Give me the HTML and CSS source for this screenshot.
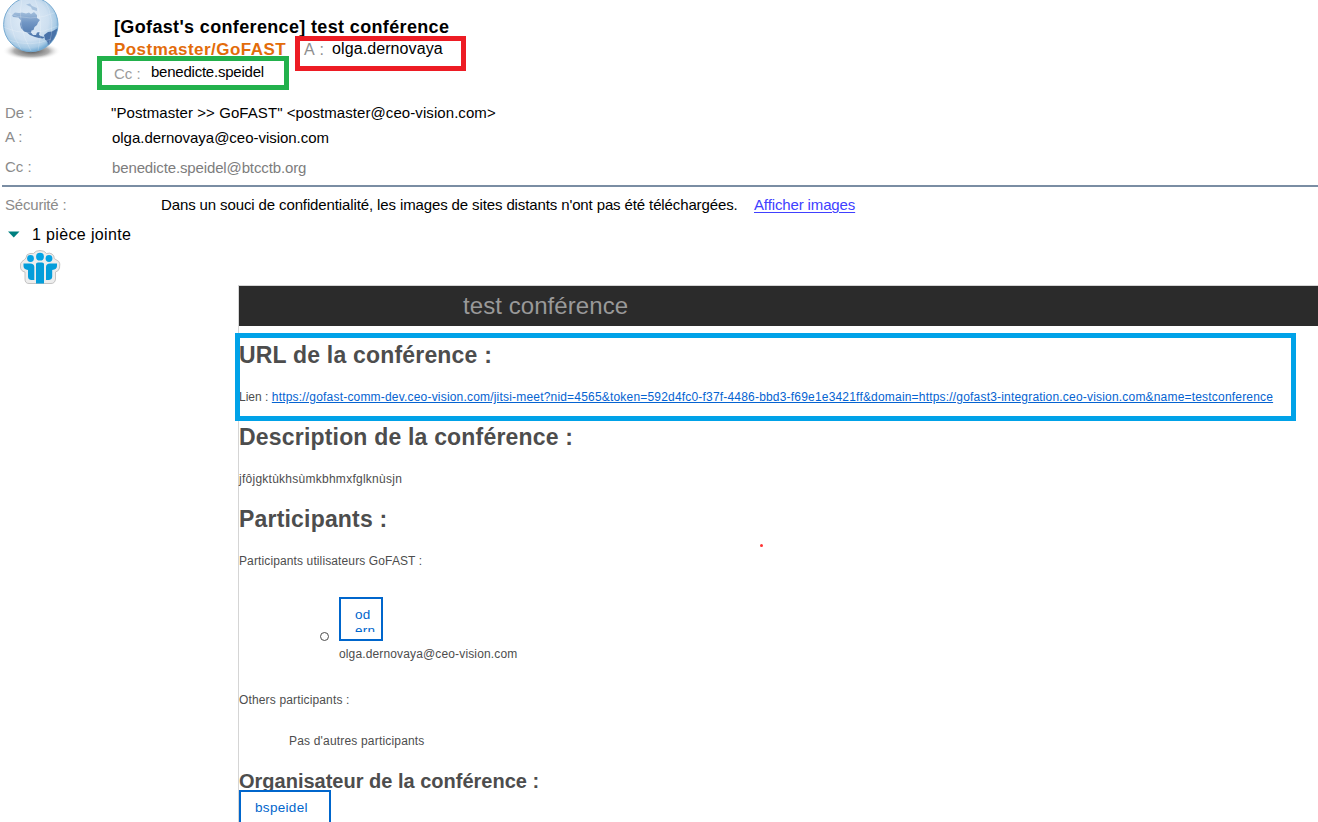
FILE: index.html
```html
<!DOCTYPE html>
<html lang="fr">
<head>
<meta charset="utf-8">
<title>test conférence</title>
<link rel="stylesheet" href="styles.css">
</head>
<body>
<header class="head">
  <svg class="globe" width="64" height="62" viewBox="0 0 64 62">
    <defs>
      <radialGradient id="sea" cx=".45" cy=".42" r=".58"><stop offset="0" stop-color="#e3eef8"/><stop offset=".65" stop-color="#cddff0"/><stop offset=".88" stop-color="#a9cbe5"/><stop offset="1" stop-color="#76acd4"/></radialGradient>
      <radialGradient id="shade"><stop offset="0" stop-color="#444" stop-opacity=".95"/><stop offset=".6" stop-color="#777" stop-opacity=".6"/><stop offset="1" stop-color="#fff" stop-opacity="0"/></radialGradient>
      <linearGradient id="land" x1="0" y1="0" x2="0" y2="1"><stop offset="0" stop-color="#a3bfdc"/><stop offset=".4" stop-color="#7196c4"/><stop offset="1" stop-color="#4a73a9"/></linearGradient>
      <clipPath id="disc"><circle cx="30.800" cy="24.500" r="27"/></clipPath>
    </defs>
    <ellipse cx="31.500" cy="51" rx="29" ry="9" fill="url(#shade)"/>
    <circle cx="30.800" cy="24.500" r="27.200" fill="url(#sea)" stroke="#78abd2" stroke-width="1"/>
    <g clip-path="url(#disc)">
      <path d="M12 15L15 12.500L19 13L22 12.500L26 13.500L29 12.500L31 14L34 12L37 15L37 18L40 20L38 22.500L37 25L34.500 27L33.500 30L31.500 30.500L31 32.500L33 35L36 35L37 32.500L39.500 32L39 35L42 36.500L44.500 37L43 38.500L39 38L35 37L30 35L27 32.500L24 31.500L21 28L20 24L21 20.500L18.500 17.500L13 17z" fill="url(#land)"/>
      <path d="M26 4.500L30 3.500L32 6L37 8L37 11L32 9.500L31 7z" fill="#a9c3de"/>
      <path d="M44 35L48 32L52 31.500L58 28V40L48 46.500L47.500 42L45 39.500z" fill="#4a73a9"/>
      <path d="M12 0Q5 25 22 51M22-2Q16 25 31 51M34-3Q45 20 38 51M43-2Q58 20 48 48M5 12Q30 24 57 12M3 27Q30 39 58 26M9 40Q31 48 51 39" fill="none" stroke="#fff" stroke-opacity=".35" stroke-width=".6"/>
    </g>
  </svg>
  <div class="summary">
    <h1 class="subject">[Gofast's conference] test conférence</h1>
    <div class="from-line"><span class="sender">Postmaster/GoFAST</span><span class="lbl-a">A :</span><span class="to-name">olga.dernovaya</span></div>
    <div class="cc-line"><span class="lbl-cc">Cc :</span><span class="cc-name">benedicte.speidel</span></div>
  </div>
  <div class="mark mark-red"></div>
  <div class="mark mark-green"></div>
</header>
<section class="fields">
  <div class="row row-de"><span class="label">De :</span><span class="value v-de">"Postmaster &gt;&gt; GoFAST" &lt;postmaster@ceo-vision.com&gt;</span></div>
  <div class="row row-a"><span class="label up">A :</span><span class="value v-a">olga.dernovaya@ceo-vision.com</span></div>
  <div class="row row-cc"><span class="label up">Cc :</span><span class="value v-cc">benedicte.speidel@btcctb.org</span></div>
</section>
<section class="security"><span class="label">Sécurité :</span><span class="notice">Dans un souci de confidentialité, les images de sites distants n'ont pas été téléchargées.</span><a class="show">Afficher images</a></section>
<section class="attach">
  <svg class="arrow" width="12" height="7" viewBox="0 0 12 7"><path d="M0 .5h11.500L5.750 6.500z" fill="#008080"/></svg><span class="count">1 pièce jointe</span>
</section>
<svg class="people" width="42" height="36" viewBox="0 0 42 36">
  <path d="M3 12.500Q5.500 11 7 9Q7 4.800 11 4.500Q13.500 4.500 14.500 4.500Q16.500 1.500 21 1.500T27.500 4.500Q31 3.500 33 5Q35.500 6.500 35.200 9.500Q37.500 11 39.800 12.500Q41.500 14 40.500 19Q40 22 36.500 23V30Q36 34.500 32 34.500H10Q6 34.500 6 30V23Q1.500 22 1.500 18Q1 14 3 12.500z" fill="#ededed" stroke="#c4c4c4" stroke-width="1"/>
  <g fill="#04a3e4"><circle cx="11.500" cy="9.500" r="3.400"/><circle cx="21" cy="7.700" r="3.900"/><circle cx="30" cy="9.500" r="3.400"/></g>
  <g fill="#049dda"><path d="M4.500 14.500H11Q15.300 14.500 15.300 18V31H12Q9 30.500 9 27.500V21Q4.500 20.500 4.500 17z"/><path d="M38 14.500H31Q27 14.500 27 18V31H30Q33.200 30.500 33.200 27.500V21Q38 20.500 38 17z"/><path d="M17 15Q17 13.500 19 13.500H23Q25 13.500 25 15V34.500H17z"/></g>
</svg>
<main class="mail">
  <div class="banner">test conférence</div>
  <div class="content">
    <h2 class="h h-url">URL de la conférence :</h2>
    <p class="p"><span class="lien">Lien :</span> <a class="url">https://gofast-comm-dev.ceo-vision.com/jitsi-meet?nid=4565&amp;token=592d4fc0-f37f-4486-bbd3-f69e1e3421ff&amp;domain=https://gofast3-integration.ceo-vision.com&amp;name=testconference</a></p>
    <h2 class="h h-desc">Description de la conférence :</h2>
    <p class="p p-desc">jfôjgktùkhsùmkbhmxfglknùsjn</p>
    <h2 class="h h-part">Participants :</h2>
    <p class="p p-users">Participants utilisateurs GoFAST :</p>
    <div class="member">
      <span class="bullet"></span>
      <div class="who"><div class="avatar"><div class="avatar-text">od<br>ern</div></div><div class="email">olga.dernovaya@ceo-vision.com</div></div>
    </div>
    <p class="others">Others participants :</p>
    <p class="none">Pas d'autres participants</p>
    <h3 class="org">Organisateur de la conférence :</h3>
    <div class="organizer">bspeidel</div>
  </div>
  <div class="mark mark-blue"></div>
  <div class="dot"></div>
</main>
</body>
</html>
```

FILE: styles.css
```css
* { box-sizing: border-box; }
body { margin: 0; width: 1318px; height: 822px; overflow: hidden; background: #fff; color: #000; font-family: "Liberation Sans", Arial, sans-serif; font-size: 15px; position: relative; }
h1, h2, h3, p { margin: 0; }
span, a { white-space: nowrap; }
.head { position: relative; display: flex; height: 101px; }
.globe { flex: none; }
.summary { padding: 17px 0 0 50px; }
.subject { font-size: 18px; line-height: 20px; height: 21px; white-space: nowrap; letter-spacing: .35px; }
.from-line { display: flex; height: 22px; line-height: 22px; font-size: 16px; }
.sender { width: 190px; color: #e36c0a; font-weight: bold; font-size: 17px; letter-spacing: .45px; line-height: 23px; }
.lbl-a { width: 28px; color: #8e8e8e; line-height: 23px; letter-spacing: .6px; }
.to-name { line-height: 21px; letter-spacing: .1px; }
.cc-line { display: flex; line-height: 24px; }
.lbl-cc { width: 37px; color: #9a9a9a; line-height: 28px; }
.cc-name { font-size: 15px; letter-spacing: -.23px; }
.mark { position: absolute; border: 5px solid; }
.mark-red { left: 295px; top: 36px; width: 171px; height: 35px; border-color: #ed1c24; }
.mark-green { left: 97px; top: 56px; width: 192px; height: 34px; border-color: #22b14c; }
.mark-blue { left: -4px; top: 47px; width: 1061px; height: 88px; border-color: #00a2e8; }
.fields { border-bottom: 2px solid #7a8da3; margin-left: 2px; height: 86px; }
.row { display: flex; }
.row-de { height: 24px; line-height: 24px; }
.row-a { height: 26px; line-height: 26px; }
.row-cc { height: 34px; line-height: 34px; }
.label { color: #8b8b8b; width: 107px; padding-left: 3px; }
.up { margin-top: -1px; }
.value { padding-left: 3px; }
.v-de { padding-left: 2px; letter-spacing: .075px; }
.v-a { letter-spacing: -.03px; }
.v-cc { color: #7d7d7d; letter-spacing: -.13px; }
.security { display: flex; height: 36px; line-height: 36px; }
.security .label { width: 161px; padding-left: 5px; letter-spacing: -.2px; }
.notice { width: 593px; letter-spacing: -.12px; }
.show { color: #4040ff; text-decoration: underline; text-underline-offset: 2px; letter-spacing: -.13px; }
.attach { display: flex; align-items: center; height: 23px; padding-left: 8px; font-size: 16px; line-height: 23px; }
.count { padding-left: 12px; letter-spacing: .36px; }
.people { display: block; margin: 3px 0 0 19px; }
.mail { position: relative; margin-left: 238px; border-left: 1px solid #d5d5d5; border-top: 1px solid #d5d5d5; height: 537px; color: #4d4d4d; }
.banner { height: 40px; line-height: 40px; background: #2b2b2b; color: #999; font-size: 24px; padding-left: 224px; letter-spacing: .07px; }
.content { padding-top: 8px; font-size: 12px; }
.h { height: 42px; line-height: 42px; font-size: 23px; letter-spacing: .19px; }
.p { height: 40px; line-height: 40px; padding-top: 1px; white-space: nowrap; letter-spacing: .12px; }
.lien { letter-spacing: 0; }
.p .url { color: #0563d1; text-decoration: underline; letter-spacing: .19px; }
.p-desc { letter-spacing: .26px; }
.member { display: flex; padding: 17px 0 0 81px; height: 84px; }
.bullet { width: 9px; height: 9px; border: 1px solid #4d4d4d; border-radius: 50%; margin: 35px 10px 0 0; }
.avatar { width: 44px; height: 44px; border: 2px solid #0066cc; padding: 8px 4px 8px 14px; }
.avatar-text { height: 25px; overflow: hidden; font-size: 13.5px; line-height: 16px; letter-spacing: .3px; color: #0066cc; }
.email { line-height: 26px; letter-spacing: .14px; }
.others { height: 72px; line-height: 72px; letter-spacing: .15px; }
.none { height: 10px; line-height: 10px; padding-left: 50px; letter-spacing: .18px; }
.org { font-size: 20px; line-height: 70px; height: 44px; }
.organizer { position: relative; width: 92px; height: 44px; border: 2px solid #0066cc; background: #fff; padding-left: 14px; font-size: 13.5px; line-height: 31px; letter-spacing: .32px; color: #0066cc; }
.dot { position: absolute; left: 521px; top: 258px; width: 3px; height: 3px; border-radius: 50%; background: #f33; }
```
